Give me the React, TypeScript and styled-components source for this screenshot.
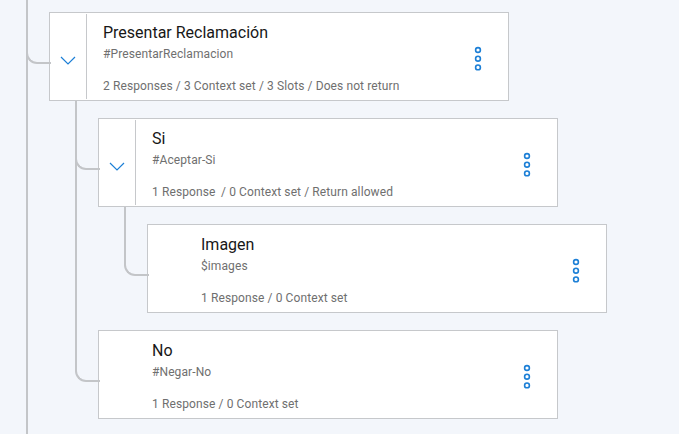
import React from "react";
import styled, { createGlobalStyle, css } from "styled-components";

const GlobalStyle = createGlobalStyle`
  html, body {
    margin: 0;
    padding: 0;
    height: 434px;
    overflow: hidden;
    background: #f3f6fb;
  }
  * { box-sizing: border-box; }
`;

const LINE = "#c3c5c8";
const ACCENT = "#1c7fd6";

const Canvas = styled.div`
  height: 434px;
  overflow: hidden;
  background: #f3f6fb;
  font-family: Roboto, "Noto Sans", sans-serif;
  padding-top: 12px;
`;

const Branch = styled.ul`
  list-style: none;
  margin: 0;
  padding: 0 0 0 49px;
`;

const Node = styled.li<{ $continues?: boolean; $root?: boolean }>`
  position: relative;
  & + & { margin-top: 17px; }
  & > ${Branch} { padding-top: 17px; }

  &::before {
    content: "";
    position: absolute;
    left: -23px;
    top: -17px;
    width: 23px;
    height: 67px;
    border-left: 2px solid ${LINE};
    border-bottom: 2px solid ${LINE};
    border-bottom-left-radius: 11px;
  }

  ${(p) =>
    p.$continues &&
    css`
      &::after {
        content: "";
        position: absolute;
        left: -23px;
        top: 0;
        bottom: ${p.$root ? "-40px" : "-17px"};
        width: 2px;
        background: ${LINE};
      }
    `}
`;

const Card = styled.div`
  display: flex;
  width: 460px;
  height: 89px;
  background: #ffffff;
  border: 1px solid #c6c8cb;
`;

const Toggle = styled.div<{ $expandable?: boolean }>`
  flex: 0 0 37px;
  margin: 1px 0;
  display: flex;
  align-items: center;
  justify-content: center;
  padding-top: 7px;
  border-right: 1px solid ${(p) => (p.$expandable ? "#c6c8cb" : "transparent")};
`;

const Body = styled.div`
  flex: 1;
  display: flex;
  flex-direction: column;
  padding: 10px 0 0 16px;
  min-width: 0;
`;

const Title = styled.div`
  font-size: 16px;
  line-height: 20px;
  color: #171717;
`;

const Condition = styled.div`
  margin-top: 3px;
  font-size: 12px;
  line-height: 16px;
  letter-spacing: 0.1px;
  color: #6f6f6f;
`;

const Summary = styled.div`
  margin-top: 16px;
  font-size: 12px;
  line-height: 16px;
  letter-spacing: 0.1px;
  color: #6f6f6f;
  white-space: pre;
`;

const Menu = styled.button`
  flex: 0 0 24px;
  margin-right: 18px;
  padding: 4px 0 0;
  border: 0;
  background: transparent;
  display: flex;
  align-items: center;
  justify-content: center;
  cursor: pointer;
`;

const Chevron = () => (
  <svg width="16" height="9" viewBox="0 0 16 9" fill="none">
    <path d="M1 1 L8 8 L15 1" stroke={ACCENT} strokeWidth="1.2" />
  </svg>
);

const Dots = () => (
  <svg width="8" height="26" viewBox="0 0 8 26" fill="none">
    <circle cx="4" cy="4" r="2.4" stroke={ACCENT} strokeWidth="1.6" />
    <circle cx="4" cy="12.7" r="2.4" stroke={ACCENT} strokeWidth="1.6" />
    <circle cx="4" cy="21.4" r="2.4" stroke={ACCENT} strokeWidth="1.6" />
  </svg>
);

type NodeData = {
  title: string;
  condition: string;
  summary: string;
  children?: NodeData[];
};

const tree: NodeData = {
  title: "Presentar Reclamación",
  condition: "#PresentarReclamacion",
  summary: "2 Responses / 3 Context set / 3 Slots / Does not return",
  children: [
    {
      title: "Si",
      condition: "#Aceptar-Si",
      summary: "1 Response\u2009 / 0 Context set / Return allowed",
      children: [
        {
          title: "Imagen",
          condition: "$images",
          summary: "1 Response / 0 Context set",
        },
      ],
    },
    {
      title: "No",
      condition: "#Negar-No",
      summary: "1 Response / 0 Context set",
    },
  ],
};

const DialogNode: React.FC<{ node: NodeData; continues?: boolean; root?: boolean }> = ({
  node,
  continues,
  root,
}) => {
  const expandable = !!node.children?.length;
  return (
    <Node $continues={continues} $root={root}>
      <Card>
        <Toggle $expandable={expandable}>{expandable && <Chevron />}</Toggle>
        <Body>
          <Title>{node.title}</Title>
          <Condition>{node.condition}</Condition>
          <Summary>{node.summary}</Summary>
        </Body>
        <Menu aria-label="More options">
          <Dots />
        </Menu>
      </Card>
      {expandable && (
        <Branch>
          {node.children!.map((c, i) => (
            <DialogNode key={c.title} node={c} continues={i < node.children!.length - 1} />
          ))}
        </Branch>
      )}
    </Node>
  );
};

export default function App() {
  return (
    <>
      <GlobalStyle />
      <Canvas>
        <Branch>
          <DialogNode node={tree} continues root />
        </Branch>
      </Canvas>
    </>
  );
}
